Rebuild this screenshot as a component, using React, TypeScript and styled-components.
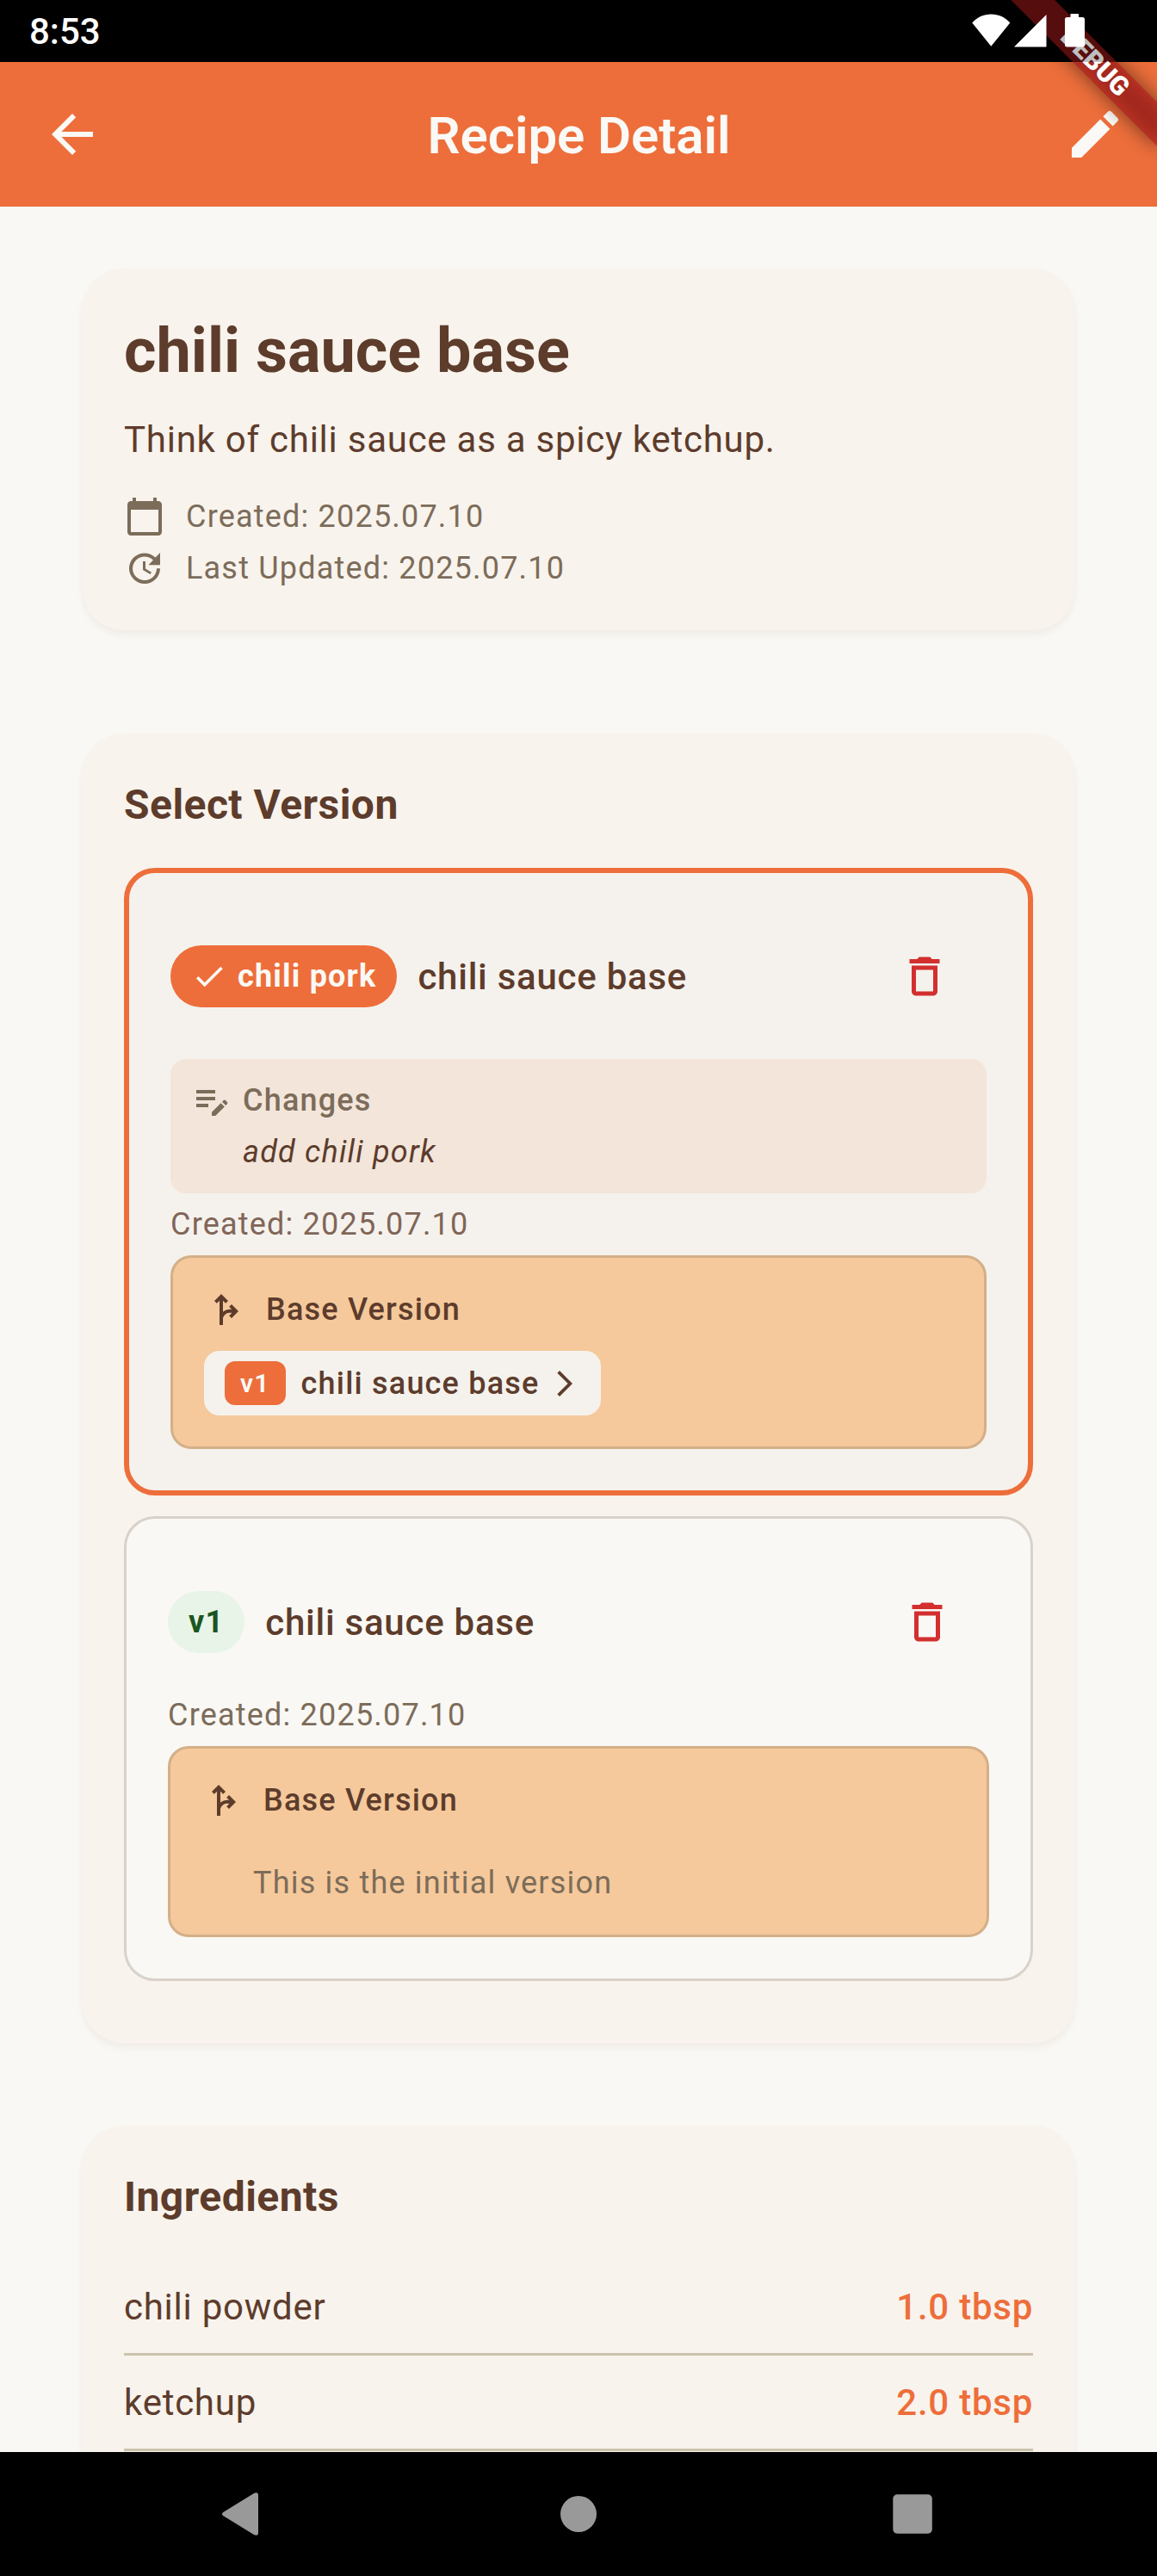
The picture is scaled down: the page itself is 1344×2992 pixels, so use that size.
import React from 'react';
import styled, { createGlobalStyle } from 'styled-components';
import {
  MdArrowBack,
  MdArrowForwardIos,
  MdCalendarToday,
  MdCheck,
  MdDeleteOutline,
  MdEdit,
  MdEditNote,
  MdForkRight,
  MdUpdate,
} from 'react-icons/md';

const color = {
  primary: '#ed6e3b',
  onPrimary: '#faf9f5',
  background: '#f9f8f4',
  card: '#f8f3ec',
  selected: '#f5f2ed',
  text: '#5d3c2c',
  muted: '#7c6c5a',
  mutedSelected: '#816557',
  changes: '#f3e5da',
  base: '#f5c99b',
  baseBorder: '#d4af88',
  outline: '#d8d2cb',
  divider: '#ccc3ae',
  danger: '#d32f2f',
};

const GlobalStyle = createGlobalStyle`
  *, *::before, *::after { box-sizing: border-box; }
  html, body { margin: 0; padding: 0; background: ${color.background}; }
  body { font-family: Roboto, "Liberation Sans", sans-serif; color: ${color.text}; }
  svg { display: block; flex: none; }
`;

const Screen = styled.div`
  position: relative;
  display: flex;
  flex-direction: column;
  width: 1344px;
  height: 2992px;
  overflow: hidden;
  background: ${color.background};
`;

/* ---- System bars ---- */

const StatusBar = styled.header`
  position: relative;
  z-index: 3;
  display: flex;
  flex: none;
  align-items: flex-start;
  justify-content: space-between;
  height: 72px;
  padding: 12px 84px 0 34px;
  background: rgba(0, 0, 0, 0.25);
  color: #fff;
`;

const Clock = styled.span`
  font-size: 42px;
  line-height: 50px;
  font-weight: 500;
`;

const StatusIcons = styled.svg`
  margin-top: 4px;
  fill: #fff;
`;

const StatusBackdrop = styled.div`
  position: absolute;
  inset: 0 0 auto 0;
  height: 72px;
  background: #000;
`;

const NavBar = styled.nav`
  display: flex;
  flex: none;
  align-items: center;
  justify-content: center;
  gap: 334px;
  height: 144px;
  background: #000;

  svg {
    fill: #999;
  }
`;

/* ---- Debug ribbon ---- */

const RibbonLayer = styled.div`
  position: absolute;
  top: 0;
  right: 0;
  z-index: 2;
  width: 240px;
  height: 240px;
  overflow: hidden;
  pointer-events: none;
`;

const RibbonAxis = styled.div`
  position: absolute;
  top: 0;
  left: 100%;
  width: 0;
  height: 0;
  transform: rotate(45deg);
`;

const RibbonShadow = styled.div`
  position: absolute;
  top: 84px;
  left: -120px;
  width: 240px;
  height: 36px;
  background: rgba(0, 0, 0, 0.5);
  filter: blur(11.9px);
`;

const Ribbon = styled.div`
  position: absolute;
  top: 84px;
  left: -120px;
  width: 240px;
  height: 36px;
  background: rgba(183, 28, 28, 0.627);
  color: #fff;
  font-size: 30.6px;
  line-height: 36px;
  font-weight: 900;
  text-align: center;
`;

/* ---- App bar ---- */

const AppBar = styled.div`
  display: flex;
  flex: none;
  align-items: center;
  justify-content: space-between;
  height: 168px;
  padding: 0 36px 0 48px;
  background: ${color.primary};
  color: ${color.onPrimary};
`;

const AppTitle = styled.h1`
  margin: 4px 0 0 -11px;
  font-size: 60px;
  line-height: 84px;
  font-weight: 600;
  letter-spacing: -0.1px;
`;

/* ---- Content ---- */

const Content = styled.main`
  display: flex;
  flex: 1;
  min-height: 0;
  flex-direction: column;
  padding: 72px 96px 0;
  overflow: hidden;
`;

const Card = styled.section<{ $after?: number }>`
  flex: none;
  padding: 48px;
  margin-bottom: ${(p) => p.$after ?? 0}px;
  border-radius: 48px;
  background: ${color.card};
  box-shadow: 0 6px 9px rgba(120, 50, 30, 0.045), 0 2px 8px rgba(120, 50, 30, 0.02);
`;

const RecipeName = styled.h2`
  margin: 0 0 24px;
  font-size: 72px;
  line-height: 96px;
  font-weight: 700;
`;

const Description = styled.p`
  margin: 0 0 35px;
  padding-top: 1px;
  font-size: 42px;
  line-height: 60px;
  letter-spacing: 0.75px;
`;

const MetaList = styled.div`
  display: flex;
  flex-direction: column;
  gap: 12px;
`;

const Meta = styled.div`
  display: flex;
  align-items: center;
  gap: 24px;
  color: ${color.muted};
`;

const Small = styled.span<{ $weight?: number; $italic?: boolean; $color?: string }>`
  font-size: 36px;
  line-height: 48px;
  letter-spacing: 1.2px;
  white-space: nowrap;
  font-weight: ${(p) => p.$weight ?? 400};
  font-style: ${(p) => (p.$italic ? 'italic' : 'normal')};
  color: ${(p) => p.$color ?? 'inherit'};
`;

const SectionTitle = styled.h3`
  margin: -1px 0 37px;
  font-size: 48px;
  line-height: 72px;
  font-weight: 700;
  letter-spacing: 0.45px;
`;

/* ---- Versions ---- */

const VersionCard = styled.article<{ $selected?: boolean }>`
  display: flex;
  flex-direction: column;
  padding: 48px;
  margin-bottom: 24px;
  border: ${(p) => (p.$selected ? `6px solid ${color.primary}` : `3px solid ${color.outline}`)};
  border-radius: 36px;
  background: ${(p) => (p.$selected ? color.selected : color.background)};
`;

const VersionHeader = styled.div`
  display: flex;
  align-items: center;
  gap: 24px;
  height: 144px;
`;

const VersionBadge = styled.span<{ $selected?: boolean }>`
  display: flex;
  align-items: center;
  gap: 12px;
  height: 72px;
  padding: 0 24px;
  border-radius: 36px;
  background: ${(p) => (p.$selected ? color.primary : '#e8f4e8')};
  color: ${(p) => (p.$selected ? color.onPrimary : '#1b5522')};
`;

const VersionTitle = styled.span`
  flex: 1;
  padding-top: 2px;
  font-size: 42px;
  line-height: 60px;
  font-weight: 500;
  letter-spacing: 0.75px;
`;

const DeleteButton = styled.button`
  display: flex;
  align-items: center;
  justify-content: center;
  width: 144px;
  height: 144px;
  padding: 0;
  border: 0;
  background: none;
  color: ${color.danger};
`;

const ChangesBox = styled.div`
  display: flex;
  gap: 12px;
  margin: 24px 0 0;
  padding: 24px;
  border-radius: 18px;
  background: ${color.changes};
  color: ${color.muted};
`;

const ChangesText = styled.div`
  display: flex;
  flex-direction: column;
  gap: 12px;
`;

const BaseBox = styled.div`
  margin-top: 12px;
  padding: 36px;
  border: 3px solid ${color.baseBorder};
  border-radius: 24px;
  background: ${color.base};
`;

const BaseHeader = styled.div`
  display: flex;
  align-items: center;
  gap: 24px;
`;

const BaseChip = styled.div`
  display: inline-flex;
  align-items: center;
  height: 75px;
  margin-top: 24px;
  padding: 0 24px;
  border-radius: 18px;
  background: ${color.selected};
  vertical-align: top;
`;

const ChipTag = styled.span`
  height: 51px;
  margin-right: 18px;
  padding: 6px 18px;
  border-radius: 12px;
  background: ${color.primary};
  color: ${color.onPrimary};
  font-size: 30px;
  line-height: 39px;
  font-weight: 600;
  letter-spacing: 1.2px;
`;

const ChipArrow = styled(MdArrowForwardIos)`
  margin-left: 12px;
`;

const InitialNote = styled.div`
  display: flex;
  margin: 48px 0 0 60px;
`;

const CreatedLine = styled.div`
  display: flex;
  margin-top: 12px;
`;

/* ---- Ingredients ---- */

const Ingredient = styled.div`
  display: flex;
  justify-content: space-between;
  padding: 25px 0 23px;
  border-bottom: 3px solid ${color.divider};
  font-size: 42px;
  line-height: 60px;
  letter-spacing: 0.75px;
`;

const Amount = styled.span`
  color: ${color.primary};
  font-weight: 500;
`;

type Version = {
  label: string;
  title: string;
  created: string;
  selected?: boolean;
  changes?: string;
  base?: { label: string; title: string };
};

const versions: Version[] = [
  {
    label: 'chili pork',
    title: 'chili sauce base',
    created: '2025.07.10',
    selected: true,
    changes: 'add chili pork',
    base: { label: 'v1', title: 'chili sauce base' },
  },
  { label: 'v1', title: 'chili sauce base', created: '2025.07.10' },
];

const ingredients = [
  { name: 'chili powder', amount: '1.0 tbsp' },
  { name: 'ketchup', amount: '2.0 tbsp' },
];

function VersionItem({ version }: { version: Version }) {
  return (
    <VersionCard $selected={version.selected}>
      <VersionHeader>
        <VersionBadge $selected={version.selected}>
          {version.selected && <MdCheck size={42} />}
          <Small $weight={700}>{version.label}</Small>
        </VersionBadge>
        <VersionTitle>{version.title}</VersionTitle>
        <DeleteButton aria-label="Delete version">
          <MdDeleteOutline size={60} />
        </DeleteButton>
      </VersionHeader>
      {version.changes && (
        <ChangesBox>
          <MdEditNote size={48} />
          <ChangesText>
            <Small $weight={500}>Changes</Small>
            <Small $italic $color={color.text}>
              {version.changes}
            </Small>
          </ChangesText>
        </ChangesBox>
      )}
      <CreatedLine>
        <Small $color={version.selected ? color.mutedSelected : color.muted}>
          Created: {version.created}
        </Small>
      </CreatedLine>
      <BaseBox>
        <BaseHeader>
          <MdForkRight size={48} />
          <Small $weight={500}>Base Version</Small>
        </BaseHeader>
        {version.base ? (
          <BaseChip>
            <ChipTag>{version.base.label}</ChipTag>
            <Small $weight={500}>{version.base.title}</Small>
            <ChipArrow size={36} />
          </BaseChip>
        ) : (
          <InitialNote>
            <Small $color={color.muted}>This is the initial version</Small>
          </InitialNote>
        )}
      </BaseBox>
    </VersionCard>
  );
}

export default function App() {
  return (
    <>
      <GlobalStyle />
      <Screen>
        <StatusBackdrop />
        <StatusBar>
          <Clock>8:53</Clock>
          <StatusIcons width="131" height="39" viewBox="0 0 131 39">
            <path d="M0.3 10.5C6 4 13.5 0.5 22.3 0.5S38.600 4 44.300 10.500L22.300 37.800Z" />
            <path d="M86.500 1V38.500H49Z" />
            <path d="M114.500 0H124V4H128.500Q131 4 131 6.500V36Q131 38.500 128.500 38.500H110.500Q108 38.500 108 36V6.500Q108 4 110.500 4H114.500Z" />
          </StatusIcons>
        </StatusBar>
        <RibbonLayer>
          <RibbonAxis>
            <RibbonShadow />
            <Ribbon>DEBUG</Ribbon>
          </RibbonAxis>
        </RibbonLayer>
        <AppBar>
          <MdArrowBack size={72} />
          <AppTitle>Recipe Detail</AppTitle>
          <MdEdit size={72} />
        </AppBar>
        <Content>
          <Card $after={120}>
            <RecipeName>chili sauce base</RecipeName>
            <Description>Think of chili sauce as a spicy ketchup.</Description>
            <MetaList>
              <Meta>
                <MdCalendarToday size={48} />
                <Small>Created: 2025.07.10</Small>
              </Meta>
              <Meta>
                <MdUpdate size={48} />
                <Small>Last Updated: 2025.07.10</Small>
              </Meta>
            </MetaList>
          </Card>
          <Card $after={96}>
            <SectionTitle>Select Version</SectionTitle>
            {versions.map((v) => (
              <VersionItem key={v.label} version={v} />
            ))}
          </Card>
          <Card>
            <SectionTitle>Ingredients</SectionTitle>
            {ingredients.map((item) => (
              <Ingredient key={item.name}>
                <span>{item.name}</span>
                <Amount>{item.amount}</Amount>
              </Ingredient>
            ))}
          </Card>
        </Content>
        <NavBar>
          <svg width="54" height="54" viewBox="0 0 54 54">
            <path d="M2.200 24.900L37.500 3.200Q43 0.500 43 5.500V48.500Q43 53.500 37.500 50.800L2.200 29.100Q-0.300 27 2.200 24.900Z" />
          </svg>
          <svg width="54" height="54" viewBox="0 0 54 54">
            <circle cx="27" cy="27" r="21" />
          </svg>
          <svg width="54" height="54" viewBox="0 0 54 54">
            <rect x="4.300" y="4.200" width="45.500" height="45.500" rx="5" />
          </svg>
        </NavBar>
      </Screen>
    </>
  );
}
